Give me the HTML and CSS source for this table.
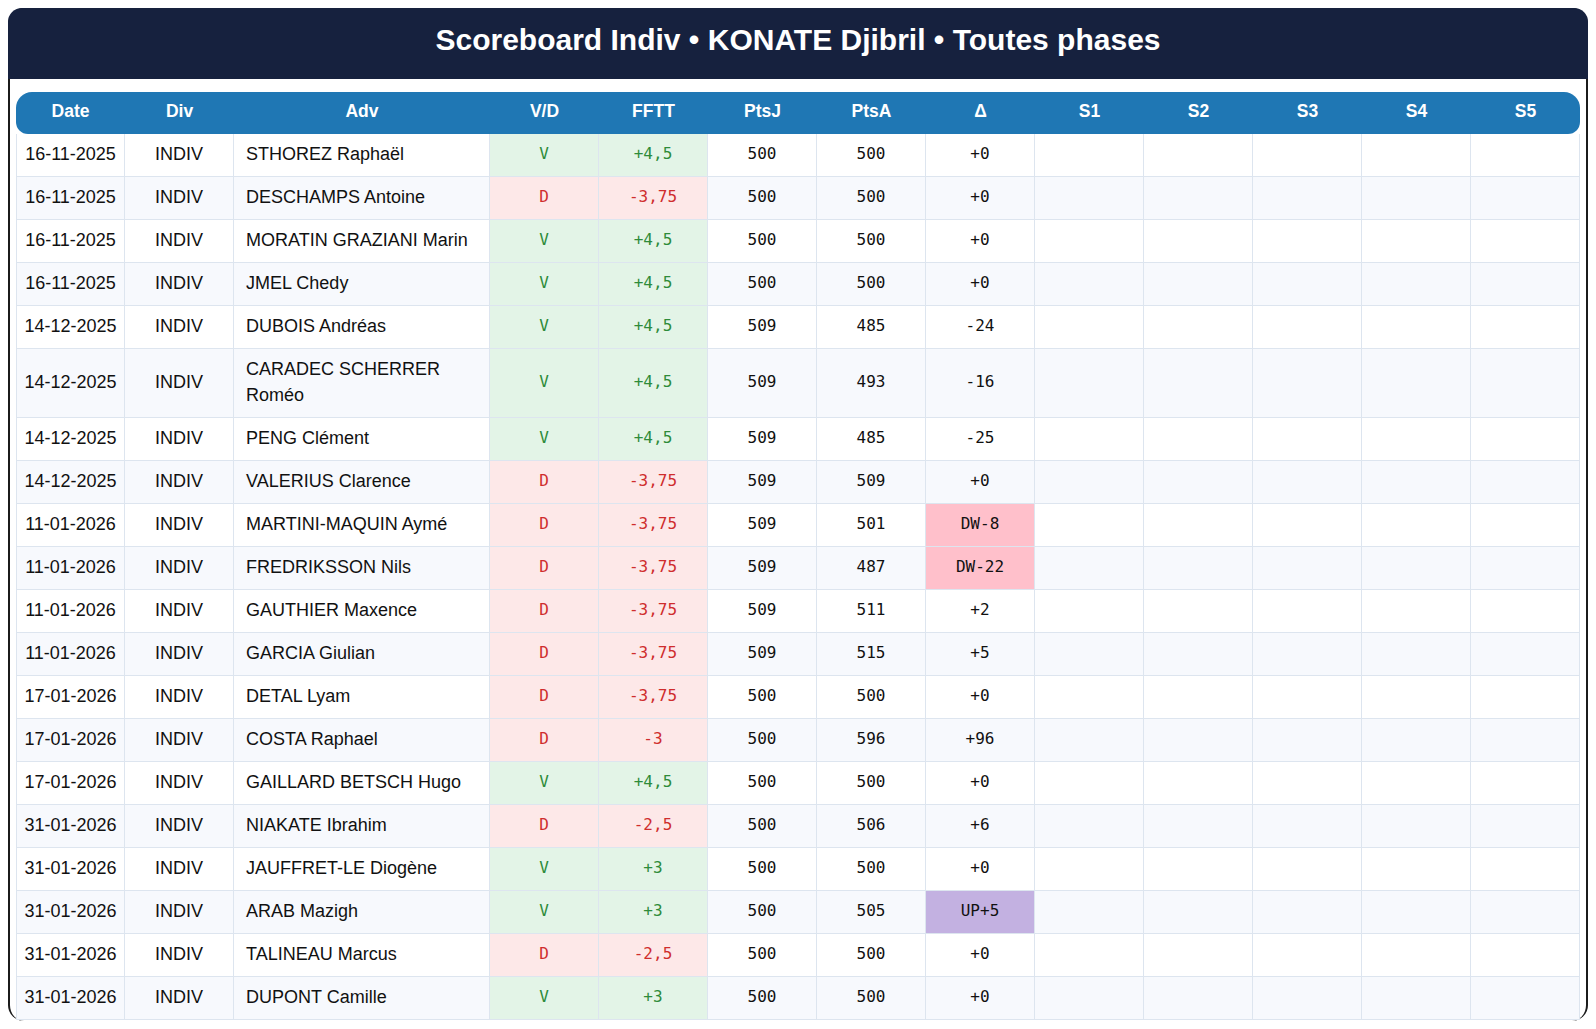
FILE: index.html
```html
<!DOCTYPE html>
<html lang="fr">
<head>
<meta charset="utf-8">
<title>Scoreboard Indiv</title>
<link rel="stylesheet" href="styles.css">
</head>
<body>
<div class="card">
  <header class="card-head">
    <h1 class="title">Scoreboard Indiv • KONATE Djibril • Toutes phases</h1>
  </header>
  <div class="card-body">
    <table class="board">
      <colgroup>
        <col class="w"><col class="w"><col class="w-adv"><col class="w"><col class="w"><col class="w"><col class="w"><col class="w"><col class="w"><col class="w"><col class="w"><col class="w"><col class="w">
      </colgroup>
      <thead>
        <tr><th>Date</th><th>Div</th><th>Adv</th><th>V/D</th><th>FFTT</th><th>PtsJ</th><th>PtsA</th><th>Δ</th><th>S1</th><th>S2</th><th>S3</th><th>S4</th><th>S5</th></tr>
      </thead>
      <tbody>
        <tr><td>16-11-2025</td><td>INDIV</td><td class="adv">STHOREZ Raphaël</td><td class="m win">V</td><td class="m win">+4,5</td><td class="m">500</td><td class="m">500</td><td class="m">+0</td><td></td><td></td><td></td><td></td><td></td></tr>
        <tr><td>16-11-2025</td><td>INDIV</td><td class="adv">DESCHAMPS Antoine</td><td class="m loss">D</td><td class="m loss">-3,75</td><td class="m">500</td><td class="m">500</td><td class="m">+0</td><td></td><td></td><td></td><td></td><td></td></tr>
        <tr><td>16-11-2025</td><td>INDIV</td><td class="adv">MORATIN GRAZIANI Marin</td><td class="m win">V</td><td class="m win">+4,5</td><td class="m">500</td><td class="m">500</td><td class="m">+0</td><td></td><td></td><td></td><td></td><td></td></tr>
        <tr><td>16-11-2025</td><td>INDIV</td><td class="adv">JMEL Chedy</td><td class="m win">V</td><td class="m win">+4,5</td><td class="m">500</td><td class="m">500</td><td class="m">+0</td><td></td><td></td><td></td><td></td><td></td></tr>
        <tr><td>14-12-2025</td><td>INDIV</td><td class="adv">DUBOIS Andréas</td><td class="m win">V</td><td class="m win">+4,5</td><td class="m">509</td><td class="m">485</td><td class="m">-24</td><td></td><td></td><td></td><td></td><td></td></tr>
        <tr><td>14-12-2025</td><td>INDIV</td><td class="adv">CARADEC SCHERRER Roméo</td><td class="m win">V</td><td class="m win">+4,5</td><td class="m">509</td><td class="m">493</td><td class="m">-16</td><td></td><td></td><td></td><td></td><td></td></tr>
        <tr><td>14-12-2025</td><td>INDIV</td><td class="adv">PENG Clément</td><td class="m win">V</td><td class="m win">+4,5</td><td class="m">509</td><td class="m">485</td><td class="m">-25</td><td></td><td></td><td></td><td></td><td></td></tr>
        <tr><td>14-12-2025</td><td>INDIV</td><td class="adv">VALERIUS Clarence</td><td class="m loss">D</td><td class="m loss">-3,75</td><td class="m">509</td><td class="m">509</td><td class="m">+0</td><td></td><td></td><td></td><td></td><td></td></tr>
        <tr><td>11-01-2026</td><td>INDIV</td><td class="adv">MARTINI-MAQUIN Aymé</td><td class="m loss">D</td><td class="m loss">-3,75</td><td class="m">509</td><td class="m">501</td><td class="m dw">DW-8</td><td></td><td></td><td></td><td></td><td></td></tr>
        <tr><td>11-01-2026</td><td>INDIV</td><td class="adv">FREDRIKSSON Nils</td><td class="m loss">D</td><td class="m loss">-3,75</td><td class="m">509</td><td class="m">487</td><td class="m dw">DW-22</td><td></td><td></td><td></td><td></td><td></td></tr>
        <tr><td>11-01-2026</td><td>INDIV</td><td class="adv">GAUTHIER Maxence</td><td class="m loss">D</td><td class="m loss">-3,75</td><td class="m">509</td><td class="m">511</td><td class="m">+2</td><td></td><td></td><td></td><td></td><td></td></tr>
        <tr><td>11-01-2026</td><td>INDIV</td><td class="adv">GARCIA Giulian</td><td class="m loss">D</td><td class="m loss">-3,75</td><td class="m">509</td><td class="m">515</td><td class="m">+5</td><td></td><td></td><td></td><td></td><td></td></tr>
        <tr><td>17-01-2026</td><td>INDIV</td><td class="adv">DETAL Lyam</td><td class="m loss">D</td><td class="m loss">-3,75</td><td class="m">500</td><td class="m">500</td><td class="m">+0</td><td></td><td></td><td></td><td></td><td></td></tr>
        <tr><td>17-01-2026</td><td>INDIV</td><td class="adv">COSTA Raphael</td><td class="m loss">D</td><td class="m loss">-3</td><td class="m">500</td><td class="m">596</td><td class="m">+96</td><td></td><td></td><td></td><td></td><td></td></tr>
        <tr><td>17-01-2026</td><td>INDIV</td><td class="adv">GAILLARD BETSCH Hugo</td><td class="m win">V</td><td class="m win">+4,5</td><td class="m">500</td><td class="m">500</td><td class="m">+0</td><td></td><td></td><td></td><td></td><td></td></tr>
        <tr><td>31-01-2026</td><td>INDIV</td><td class="adv">NIAKATE Ibrahim</td><td class="m loss">D</td><td class="m loss">-2,5</td><td class="m">500</td><td class="m">506</td><td class="m">+6</td><td></td><td></td><td></td><td></td><td></td></tr>
        <tr><td>31-01-2026</td><td>INDIV</td><td class="adv">JAUFFRET-LE Diogène</td><td class="m win">V</td><td class="m win">+3</td><td class="m">500</td><td class="m">500</td><td class="m">+0</td><td></td><td></td><td></td><td></td><td></td></tr>
        <tr><td>31-01-2026</td><td>INDIV</td><td class="adv">ARAB Mazigh</td><td class="m win">V</td><td class="m win">+3</td><td class="m">500</td><td class="m">505</td><td class="m up">UP+5</td><td></td><td></td><td></td><td></td><td></td></tr>
        <tr><td>31-01-2026</td><td>INDIV</td><td class="adv">TALINEAU Marcus</td><td class="m loss">D</td><td class="m loss">-2,5</td><td class="m">500</td><td class="m">500</td><td class="m">+0</td><td></td><td></td><td></td><td></td><td></td></tr>
        <tr><td>31-01-2026</td><td>INDIV</td><td class="adv">DUPONT Camille</td><td class="m win">V</td><td class="m win">+3</td><td class="m">500</td><td class="m">500</td><td class="m">+0</td><td></td><td></td><td></td><td></td><td></td></tr>
      </tbody>
    </table>
  </div>
</div>
</body>
</html>
```

FILE: styles.css
```css
html, body {
  background: #ffffff;
}
body {
  margin: 8px;
  font-family: "Liberation Sans", Arial, sans-serif;
  color: #111111;
}
.card {
  box-sizing: border-box;
  height: calc(100vh - 16px);
  border: 2px solid #1b1b1b;
  border-bottom: 0;
  border-radius: 16px;
  background: #ffffff;
}
.card-head {
  background: #16213e;
  border-radius: 14px 14px 0 0;
  margin: -2px -2px 0;
  padding: 15px 0 22px;
}
.title {
  margin: 0;
  text-align: center;
  color: #ffffff;
  font-size: 30px;
  line-height: 34px;
  font-weight: 700;
}
.card-body {
  padding: 13px 6px 0;
}
.board {
  width: 100%;
  table-layout: fixed;
  border-collapse: separate;
  border-spacing: 0;
  font-size: 18px;
}
.board col.w {
  width: 109px;
}
.board th {
  background: #1f77b4;
  color: #ffffff;
  font-weight: 700;
  font-size: 17.5px;
  line-height: 22px;
  padding: 8px 4px 12px;
  text-align: center;
}
.board th:first-child {
  border-radius: 16px 0 0 12px;
}
.board th:last-child {
  border-radius: 0 16px 12px 0;
}
.board td {
  padding: 7px 4px 9px;
  line-height: 26px;
  text-align: center;
  white-space: nowrap;
  border-right: 1px solid #dde5ef;
  border-bottom: 1px solid #dde5ef;
  background: #ffffff;
  vertical-align: middle;
}
.board td:first-child {
  border-left: 1px solid #dde5ef;
}
.board tbody tr:nth-child(even) td {
  background: #f7f9fd;
}
.board td.adv {
  text-align: left;
  white-space: normal;
  padding-left: 12px;
  padding-right: 12px;
}
.board td.m {
  font-family: "DejaVu Sans Mono", monospace;
  font-size: 16px;
}
.board td.win,
.board tbody tr:nth-child(even) td.win {
  background: #e3f4e7;
  color: #2e8b3a;
}
.board td.loss,
.board tbody tr:nth-child(even) td.loss {
  background: #fde8e8;
  color: #cf2d2d;
}
.board td.dw,
.board tbody tr:nth-child(even) td.dw {
  background: #ffc0cb;
}
.board td.up,
.board tbody tr:nth-child(even) td.up {
  background: #c3b1e1;
}
```
